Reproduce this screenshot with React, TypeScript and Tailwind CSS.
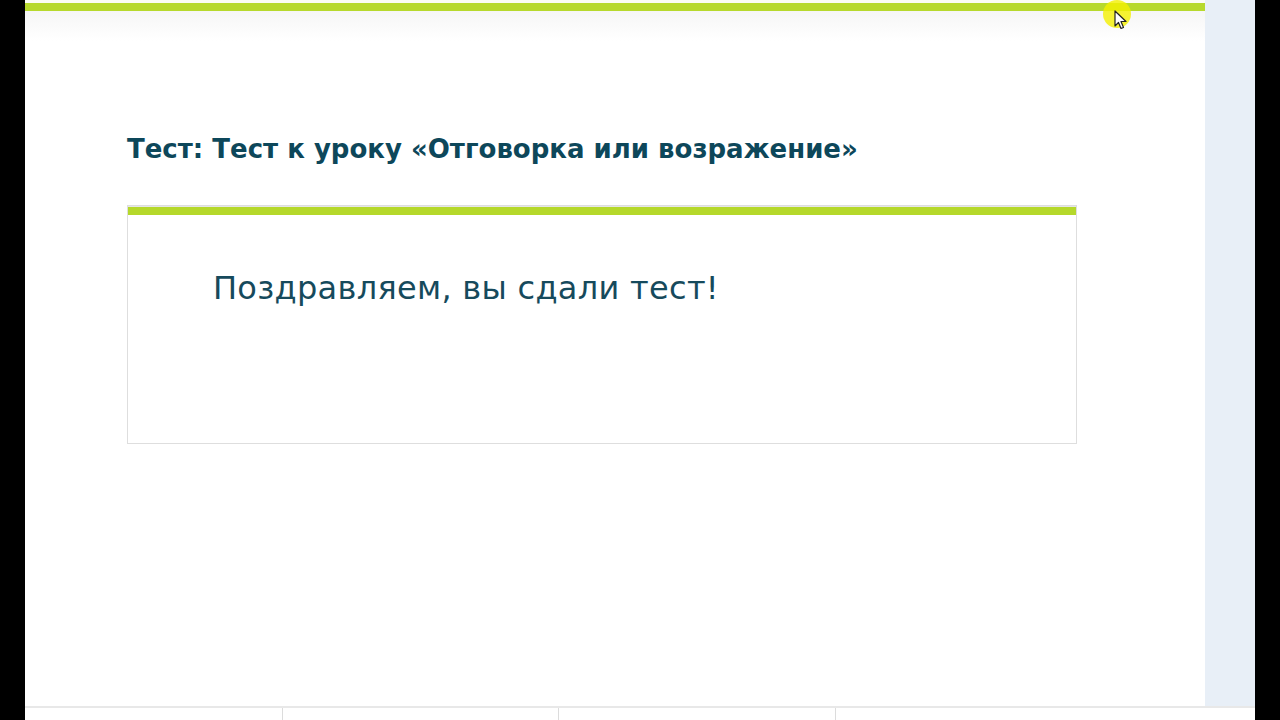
import React from 'react';

const font = { fontFamily: '"DejaVu Sans", "Noto Sans", sans-serif' };

const Cursor = () => (
    <div className="absolute left-[1103px] top-[0px] w-[28px] h-[28px]">
        <div className="absolute inset-0 rounded-full bg-[#f4f000]/80"></div>
        <svg className="absolute left-[11px] top-[10px]" width="14" height="20" viewBox="0 0 14 20">
            <path d="M1 1 L1 16 L4.5 12.5 L7 18.5 L9.5 17.5 L7 11.5 L12 11.5 Z" fill="#fff" stroke="#222" strokeWidth="1.2" strokeLinejoin="round" />
        </svg>
    </div>
);

export default function App() {
    return (
        <div className="w-[1280px] h-[720px] bg-black flex overflow-hidden relative" style={font}>
            <div className="w-[25px] shrink-0"></div>

            <div className="w-[1230px] flex flex-col bg-white">
                <div className="flex flex-1">
                    {/* Main content */}
                    <div className="w-[1180px] flex flex-col bg-white">
                        <div className="h-[3px] bg-[#fbfcf4]"></div>
                        <div className="h-[8px] bg-[#b7d92d]"></div>
                        <div className="h-[30px] bg-gradient-to-b from-[#f6f6f6] to-white"></div>

                        <div className="pl-[102px] pt-[95px]">
                            <h1 className="text-[26px] font-bold text-[#0d475a] leading-none">
                                Тест: Тест к уроку «Отговорка или возражение»
                            </h1>

                            <div className="mt-[43px] w-[950px] h-[239px] border border-[#dedede] bg-white">
                                <div className="h-[9px] border-t border-[#e6e6e6] bg-[#b5d82b]"></div>
                                <p className="pl-[85px] pt-[57px] text-[32px] tracking-[0.3px] text-[#164a5c] leading-none">
                                    Поздравляем, вы сдали тест!
                                </p>
                            </div>
                        </div>
                    </div>

                    {/* Right rail */}
                    <div className="w-[50px] bg-[#e8eff7]"></div>
                </div>

                {/* Bottom strip */}
                <div className="h-[2px] bg-[#e8e8e8]"></div>
                <div className="h-[12px] bg-white flex">
                    <div className="w-[257px]"></div>
                    <div className="w-[1px] h-full bg-[#dcdcdc]"></div>
                    <div className="w-[275px]"></div>
                    <div className="w-[1px] h-full bg-[#dcdcdc]"></div>
                    <div className="w-[276px]"></div>
                    <div className="w-[1px] h-full bg-[#dcdcdc]"></div>
                </div>
            </div>

            <Cursor />
        </div>
    );
}
